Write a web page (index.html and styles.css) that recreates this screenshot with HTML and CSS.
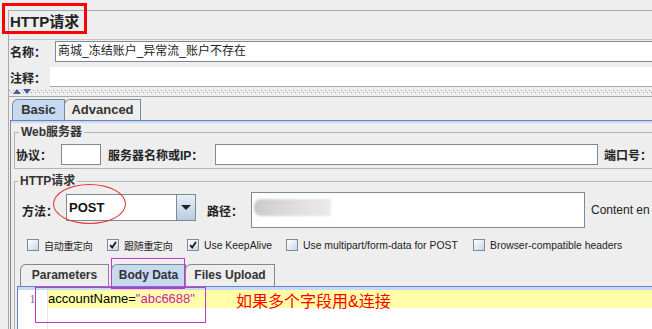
FILE: index.html
```html
<!DOCTYPE html>
<html lang="zh-CN">
<head>
    <meta charset="UTF-8">
    <title>HTTP请求</title>
    <link rel="stylesheet" href="styles.css">
</head>
<body>
<div class="main">
    <div class="title">HTTP请求</div>
    <div class="row name-row">
        <span class="lbl">名称：</span>
        <div class="field name-field">商城_冻结账户_异常流_账户不存在</div>
    </div>
    <div class="row note-row">
        <span class="lbl">注释：</span>
        <div class="note-field"></div>
    </div>
    <div class="split"><i class="up"></i><i class="down"></i></div>
    <div class="tabpane">
        <div class="tabs">
            <div class="tab on tab-basic">Basic</div>
            <div class="tab tab-adv">Advanced</div>
        </div>
        <div class="panel">
            <fieldset class="group web">
                <legend>Web服务器</legend>
                <div class="row web-row">
                    <span class="lbl w-proto">协议：</span>
                    <div class="field f-proto"></div>
                    <span class="lbl w-host">服务器名称或IP：</span>
                    <div class="field f-host"></div>
                    <span class="lbl w-port">端口号：</span>
                </div>
            </fieldset>
            <fieldset class="group http">
                <legend>HTTP请求</legend>
                <div class="row req-row">
                    <span class="lbl w-method">方法：</span>
                    <div class="combo">
                        <div class="combo-val">POST</div>
                        <div class="combo-btn"><i></i></div>
                    </div>
                    <span class="lbl w-path">路径：</span>
                    <div class="field f-path"><span class="blur"></span></div>
                    <span class="plain">Content en</span>
                </div>
                <div class="checks">
                    <div class="chk chk-a"><span class="box"></span><span class="cn">自动重定向</span></div>
                    <div class="chk chk-b"><span class="box"><svg viewBox="0 0 12 12"><path d="M2.5 6 L5 9 L9.5 2.5" /></svg></span><span class="cn">跟随重定向</span></div>
                    <div class="chk chk-c"><span class="box"><svg viewBox="0 0 12 12"><path d="M2.5 6 L5 9 L9.5 2.5" /></svg></span>Use KeepAlive</div>
                    <div class="chk chk-d"><span class="box"></span>Use multipart/form-data for POST</div>
                    <div class="chk"><span class="box"></span>Browser-compatible headers</div>
                </div>
                <div class="tabs sub-tabs">
                    <div class="tab t-param">Parameters</div>
                    <div class="tab on t-body">Body Data</div>
                    <div class="tab t-files">Files Upload</div>
                </div>
                <div class="editor">
                    <div class="gutter">1</div>
                    <div class="code">
                        <div class="line">accountName=<span class="str">"abc6688"</span></div>
                    </div>
                    <div class="note">如果多个字段用&amp;连接</div>
                </div>
            </fieldset>
        </div>
    </div>
</div>
<div class="mark mark-title"></div>
<div class="mark mark-method"></div>
<div class="mark mark-tab"></div>
<div class="mark mark-code"></div>
</body>
</html>
```

FILE: styles.css
```css
html{
    margin: 0;
}
body{
    margin: 0;
    padding: 10px 0 0 8px;
    width: 652px;
    height: 329px;
    box-sizing: border-box;
    overflow: hidden;
    position: relative;
    background: #eeeeee;
    font-family: "Liberation Sans", "Noto Sans CJK SC", sans-serif;
    color: #333;
}
.main{
    width: 643px;
    height: 318px;
    overflow: hidden;
    border-top: 1px solid #a9a9a9;
    border-left: 1px solid #a9a9a9;
}
.title{
    height: 28px;
    box-sizing: border-box;
    padding: 1px 0 0 1px;
    font-size: 15px;
    font-weight: bold;
    line-height: 20px;
    color: #222;
}
.row{
    display: flex;
    align-items: center;
}
.lbl{
    flex: none;
    font-size: 12px;
    font-weight: bold;
    color: #222;
    white-space: nowrap;
}
.field{
    flex: none;
    box-sizing: border-box;
    height: 21px;
    background: #fff;
    border: 1px solid #7a8a99;
}
.name-row{
    border-top: 1px solid #c6c6c6;
    padding: 1px 0 0 1px;
}
.name-row .lbl{
    width: 45px;
}
.name-field{
    flex: 1;
    border-right: none;
    padding-left: 2px;
    font-size: 12px;
    line-height: 19px;
    color: #222;
}
.note-row{
    margin-top: 5px;
    padding-left: 1px;
    height: 20px;
}
.note-row .lbl{
    width: 40px;
}
.note-field{
    flex: 1;
    height: 20px;
    box-sizing: border-box;
    background: #fff;
    border-bottom: 1px solid #a8a8a8;
}
.split{
    display: flex;
    align-items: flex-start;
    gap: 2px;
    height: 9px;
    box-sizing: border-box;
    padding: 2px 0 0 4px;
    background:
        repeating-linear-gradient(90deg, #8fa0bd 0 1px, transparent 1px 4px) 0 3px / 100% 1px no-repeat,
        repeating-linear-gradient(90deg, #8fa0bd 0 1px, transparent 1px 4px) 2px 5px / 100% 1px no-repeat;
}
.split i{
    width: 0;
    height: 0;
    border-left: 4px solid transparent;
    border-right: 4px solid transparent;
}
.split .up{
    border-bottom: 5px solid #3f5f93;
}
.split .down{
    border-top: 5px solid #3f5f93;
}
.tabpane{
    border-top: 1px solid #a8a8a8;
    padding: 2px 0 0 1px;
}
.tabs{
    display: flex;
    height: 21px;
    padding-left: 2px;
}
.tab{
    flex: none;
    box-sizing: border-box;
    height: 21px;
    border: 1px solid #7a8a99;
    border-bottom: none;
    border-top-left-radius: 6px;
    background: #eeeeee;
    font-size: 13px;
    font-weight: bold;
    line-height: 19px;
    text-align: center;
    color: #333;
}
.tab.on{
    background: #c6d9f0;
}
.tab-basic{
    width: 53px;
}
.tab-adv{
    width: 77px;
    margin-left: -1px;
}
.panel{
    border-top: 1px solid #6382bf;
    border-left: 1px solid #7a8a99;
    box-shadow: inset 0 2px 0 #c8daf0;
    padding: 3px 0 0 3px;
}
.group{
    margin: 0;
    padding: 0 0 3px 1px;
    min-width: 0;
    border: 1px solid #b4b4b4;
    border-right: none;
}
.group legend{
    margin-left: 3px;
    padding: 0 2px;
    font-size: 12px;
    font-weight: bold;
    line-height: 16px;
    color: #333;
}
.web-row{
    margin-top: 4px;
    height: 21px;
}
.w-proto{
    width: 45px;
}
.f-proto{
    width: 40px;
}
.w-host{
    width: 107px;
    margin-left: 7px;
}
.f-host{
    width: 383px;
}
.w-port{
    margin-left: 6px;
}
.http{
    margin-top: 4px;
    padding: 0 0 0 2px;
    height: 200px;
}
.http legend{
    margin-left: 1px;
}
.req-row{
    margin-top: 3px;
    height: 36px;
    padding-left: 5px;
}
.w-method{
    width: 44px;
}
.combo{
    flex: none;
    display: flex;
    width: 130px;
    height: 27px;
    align-self: flex-start;
    margin-top: 2px;
}
.combo-val{
    flex: 1;
    box-sizing: border-box;
    background: #fff;
    border: 1px solid #7a8a99;
    padding-left: 2px;
    font-size: 13px;
    font-weight: bold;
    line-height: 25px;
    color: #111;
}
.combo-btn{
    width: 19px;
    box-sizing: border-box;
    border: 1px solid #7a8a99;
    border-left: none;
    background: linear-gradient(#e8eff7, #b7cce2);
    display: flex;
    align-items: center;
    justify-content: center;
}
.combo-btn i{
    width: 0;
    height: 0;
    border-left: 5px solid transparent;
    border-right: 5px solid transparent;
    border-top: 5px solid #222;
}
.w-path{
    width: 44px;
    margin-left: 11px;
}
.f-path{
    width: 334px;
    height: 36px;
}
.blur{
    display: block;
    width: 77px;
    height: 17px;
    margin: 6px 0 0 2px;
    border-radius: 7px 0 0 7px;
    background: linear-gradient(90deg, #c9c9c9 0, #d8d6d6 30%, #e2dfdf 60%, #ebebeb 100%);
    filter: blur(1px);
}
.plain{
    margin-left: 6px;
    font-size: 12px;
    color: #222;
    white-space: nowrap;
}
.checks{
    display: flex;
    align-items: center;
    margin-top: 11px;
    height: 12px;
    padding-left: 10px;
}
.chk{
    flex: none;
    display: flex;
    align-items: center;
    font-size: 10.4px;
    color: #222;
    white-space: nowrap;
}
.chk .cn{
    font-size: 10px;
    letter-spacing: -0.3px;
}
.chk-a, .chk-b{
    width: 80px;
}
.chk-c{
    width: 99px;
}
.chk-d{
    width: 187px;
}
.box{
    flex: none;
    width: 12px;
    height: 12px;
    box-sizing: border-box;
    margin-right: 5px;
    border: 1px solid #7a8a99;
    background: linear-gradient(135deg, #ffffff, #c9d6e5);
}
.box svg{
    display: block;
    width: 10px;
    height: 10px;
}
.box path{
    fill: none;
    stroke: #111;
    stroke-width: 2;
}
.sub-tabs{
    margin-top: 13px;
    height: 22px;
    padding-left: 3px;
}
.sub-tabs .tab{
    height: 22px;
    font-size: 12px;
    line-height: 21px;
}
.t-param{
    width: 89px;
}
.t-body{
    width: 75px;
    margin-left: 2px;
}
.t-files{
    width: 90px;
    margin-left: -1px;
}
.editor{
    position: relative;
    display: flex;
    height: 40px;
    border-top: 1px solid #6382bf;
    border-left: 1px solid #6382bf;
    box-shadow: inset 0 3px 0 #c8daf0;
    padding-top: 3px;
}
.gutter{
    width: 29px;
    border-right: 1px solid #e6e6e6;
    background: #fff;
    font-family: "Liberation Serif", serif;
    font-size: 12px;
    line-height: 18px;
    text-align: center;
    color: #8a6f5a;
}
.code{
    flex: 1;
    background: #fff;
}
.line{
    height: 18px;
    background: #ffffaa;
    font-size: 13px;
    line-height: 18px;
    color: #000;
}
.str{
    color: #cc22a6;
}
.note{
    position: absolute;
    left: 218px;
    top: 6px;
    font-size: 16px;
    line-height: 18px;
    color: #ff0000;
    white-space: nowrap;
}
.mark{
    position: absolute;
    box-sizing: border-box;
}
.mark-title{
    left: 2px;
    top: 3px;
    width: 85px;
    height: 31px;
    border: 3px solid #ff0000;
}
.mark-method{
    left: 53px;
    top: 184px;
    width: 73px;
    height: 40px;
    border: 1px solid #e8312f;
    border-radius: 50%;
}
.mark-tab{
    left: 111px;
    top: 258px;
    width: 74px;
    height: 31px;
    border: 1px solid #cc33cc;
}
.mark-code{
    left: 35px;
    top: 287px;
    width: 171px;
    height: 36px;
    border: 1px solid #cc33cc;
}
```
